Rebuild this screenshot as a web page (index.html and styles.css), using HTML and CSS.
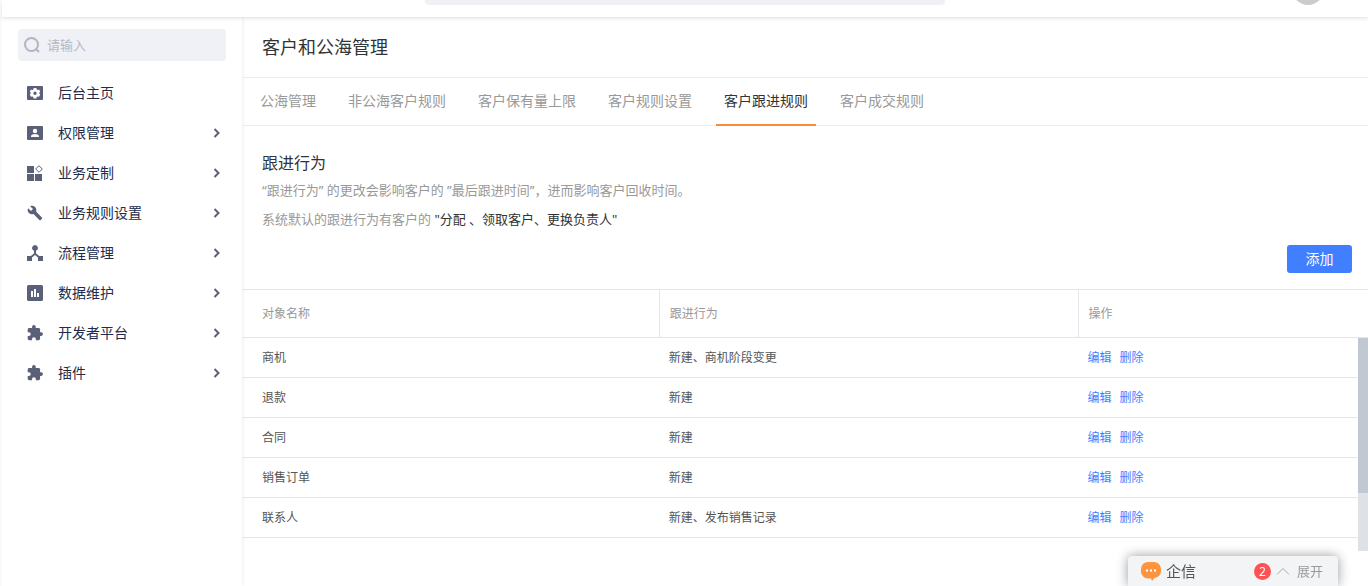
FILE: index.html
```html
<!DOCTYPE html>
<html lang="zh-CN">
<head>
<meta charset="utf-8">
<title>客户和公海管理</title>
<link rel="stylesheet" href="styles.css">
</head>
<body>
<svg class="sprite" aria-hidden="true">
  <symbol id="arrow" viewBox="0 0 8 10"><path d="M1.500 1l4 4-4 4" fill="none" stroke="currentColor" stroke-width="2"/></symbol>
  <symbol id="puzzle" viewBox="1 1 22 22"><path d="M20.500 11H19V7c0-1.100-.9-2-2-2h-4V3.500a2.500 2.500 0 0 0-5 0V5H4c-1.100 0-2 .9-2 2v3.800h1.500a2.700 2.700 0 0 1 0 5.400H2V20c0 1.100.9 2 2 2h3.800v-1.500a2.700 2.700 0 0 1 5.400 0V22H17c1.100 0 2-.9 2-2v-4h1.500a2.500 2.500 0 0 0 0-5z"/></symbol>
</svg>
<header class="topbar">
  <div class="topbar-search"></div>
  <div class="avatar"></div>
</header>
<div class="shell">
  <aside class="sidebar">
    <label class="search">
      <svg class="search-icon" viewBox="0 0 16 16"><circle cx="7.500" cy="7.500" r="6.500"/><path d="M12 12l3 3"/></svg>
      <input class="search-input" type="text" placeholder="请输入" aria-label="搜索">
    </label>
    <nav class="menu">
      <a class="item" href="#"><svg class="icon" viewBox="0 0 16 16"><path fill-rule="evenodd" d="M1 1h14a1 1 0 0 1 1 1v12a1 1 0 0 1-1 1H1a1 1 0 0 1-1-1V2a1 1 0 0 1 1-1zM6.700 3l-.4 1.500-.9.500L4 4.600 2.700 6.800l1.100 1v.8l-1.100 1L4 11.800l1.400-.4.900.5.400 1.500h2.600l.4-1.500.9-.5 1.400.4 1.300-2.200-1.100-1v-.8l1.100-1L12 4.600l-1.400.4-.9-.5L9.300 3zM8 6.500a1.700 1.700 0 1 1 0 3.400 1.700 1.700 0 0 1 0-3.400z"/></svg><span class="name">后台主页</span></a>
      <a class="item" href="#"><svg class="icon" viewBox="0 0 16 16"><path fill-rule="evenodd" d="M1 1h14a1 1 0 0 1 1 1v12a1 1 0 0 1-1 1H1a1 1 0 0 1-1-1V2a1 1 0 0 1 1-1zM8 3.800a2.200 2.200 0 1 0 0 4.400 2.200 2.200 0 0 0 0-4.400zM4 12h8v-.8C12 9.700 9.500 9 8 9s-4 .7-4 2.200z"/></svg><span class="name">权限管理</span><svg class="arrow"><use href="#arrow"/></svg></a>
      <a class="item" href="#"><svg class="icon" viewBox="0 0 16 16"><path d="M0 1h7v7H0zM0 9h7v7H0zM8 9h7v7H8z"/><path d="M12 .7L15.300 4 12 7.300 8.700 4z" fill="none" stroke="currentColor"/></svg><span class="name">业务定制</span><svg class="arrow"><use href="#arrow"/></svg></a>
      <a class="item" href="#"><svg class="icon" viewBox="0 0 24 24"><path d="M22.700 19l-9.100-9.100c.9-2.300.4-5-1.500-6.900-2-2-5-2.400-7.400-1.300L9 6 6 9 1.600 4.700C.4 7.100.9 10.100 2.900 12.100c1.900 1.900 4.600 2.400 6.900 1.500l9.100 9.100c.4.400 1 .4 1.400 0l2.300-2.300c.5-.4.5-1.100.1-1.400z"/></svg><span class="name">业务规则设置</span><svg class="arrow"><use href="#arrow"/></svg></a>
      <a class="item" href="#"><svg class="icon" viewBox="0 0 16 16"><path d="M8 0a3 3 0 0 1 1 5.800v2.700l3.200 2.500H16v5h-5v-3.600l-3-2.300-3 2.300V16H0v-5h3.800L7 8.500V5.800A3 3 0 0 1 8 0z"/></svg><span class="name">流程管理</span><svg class="arrow"><use href="#arrow"/></svg></a>
      <a class="item" href="#"><svg class="icon" viewBox="0 0 16 16"><path fill-rule="evenodd" d="M1.500 0h13A1.500 1.500 0 0 1 16 1.500v13a1.500 1.500 0 0 1-1.500 1.500h-13A1.500 1.500 0 0 1 0 14.500v-13A1.500 1.500 0 0 1 1.500 0zM4 6v6h2V6zM7 4v8h2V4zM10 8v4h2V8z"/></svg><span class="name">数据维护</span><svg class="arrow"><use href="#arrow"/></svg></a>
      <a class="item" href="#"><svg class="icon"><use href="#puzzle"/></svg><span class="name">开发者平台</span><svg class="arrow"><use href="#arrow"/></svg></a>
      <a class="item" href="#"><svg class="icon"><use href="#puzzle"/></svg><span class="name">插件</span><svg class="arrow"><use href="#arrow"/></svg></a>
    </nav>
  </aside>
  <main class="main">
    <h1 class="title">客户和公海管理</h1>
    <nav class="tabs">
      <a class="tab" href="#">公海管理</a>
      <a class="tab" href="#">非公海客户规则</a>
      <a class="tab" href="#">客户保有量上限</a>
      <a class="tab" href="#">客户规则设置</a>
      <a class="tab active" href="#">客户跟进规则</a>
      <a class="tab" href="#">客户成交规则</a>
    </nav>
    <section class="intro">
      <h2 class="subtitle">跟进行为</h2>
      <p class="note">“跟进行为” 的更改会影响客户的 ”最后跟进时间”，进而影响客户回收时间。</p>
      <p class="note">系统默认的跟进行为有客户的 <span class="strong">"分配 、领取客户、更换负责人"</span></p>
      <div class="actions"><button class="add" type="button">添加</button></div>
    </section>
    <div class="table-wrap">
      <table class="table">
        <colgroup><col class="col-name"><col class="col-behavior"><col></colgroup>
        <thead><tr><th>对象名称</th><th>跟进行为</th><th>操作</th></tr></thead>
        <tbody>
          <tr><td>商机</td><td>新建、商机阶段变更</td><td><a class="link" href="#">编辑</a><a class="link" href="#">删除</a></td></tr>
          <tr><td>退款</td><td>新建</td><td><a class="link" href="#">编辑</a><a class="link" href="#">删除</a></td></tr>
          <tr><td>合同</td><td>新建</td><td><a class="link" href="#">编辑</a><a class="link" href="#">删除</a></td></tr>
          <tr><td>销售订单</td><td>新建</td><td><a class="link" href="#">编辑</a><a class="link" href="#">删除</a></td></tr>
          <tr><td>联系人</td><td>新建、发布销售记录</td><td><a class="link" href="#">编辑</a><a class="link" href="#">删除</a></td></tr>
        </tbody>
      </table>
      <div class="scrollbar"><div class="thumb"></div></div>
    </div>
  </main>
</div>
<div class="chat">
  <svg class="bubble" viewBox="0 0 20 19"><path d="M7 0h6a7 7 0 0 1 7 7v2a7 7 0 0 1-6.500 7L11 19l-1-2.500H7A7 7 0 0 1 0 9V7a7 7 0 0 1 7-7z" fill="#ff943e"/><path d="M5 7.500h2v2H5zM9 7.500h2v2H9zM13 7.500h2v2h-2z" fill="#fff"/></svg>
  <span class="chat-name">企信</span>
  <span class="badge">2</span>
  <button class="expand" type="button"><svg class="caret" viewBox="0 0 14 8"><path d="M1 7.500l6-6 6 6" fill="none" stroke="#aaa"/></svg>展开</button>
</div>
</body>
</html>
```

FILE: styles.css
```css
* { box-sizing: border-box; }
body {
  margin: 0;
  min-height: 100vh;
  display: flex;
  flex-direction: column;
  overflow: hidden;
  background: #fff;
  color: #333;
  font: 14px/20px "Noto Sans", "Noto Sans CJK SC", sans-serif;
}
a { text-decoration: none; color: inherit; }
button, input { font: inherit; }
.sprite { position: absolute; width: 0; height: 0; }

.topbar {
  position: relative;
  z-index: 1;
  display: grid;
  grid-template-columns: 1fr 38% 1fr;
  height: 17px;
  margin-left: 2px;
  background: #fff;
  box-shadow: 0 1px 4px rgba(0, 0, 0, .14);
}
.topbar-search {
  grid-column: 2;
  height: 5px;
  background: #f0f1f6;
  border-radius: 0 0 4px 4px;
}
.avatar {
  justify-self: end;
  width: 32px;
  height: 32px;
  margin: -27px 44px 0 0;
  border-radius: 50%;
  background: #ccc;
}

.shell { display: flex; flex: 1; }
.sidebar {
  width: 242px;
  padding: 12px 16px 0;
  border-left: 2px solid #fafafa;
  box-shadow: 0 0 4px rgba(0, 0, 0, .1);
}
.search {
  display: flex;
  align-items: center;
  gap: 7px;
  height: 32px;
  padding: 0 6px;
  border-radius: 4px;
  background: #f0f1f6;
}
.search-icon { flex: none; width: 16px; height: 16px; fill: none; stroke: #b3b5be; stroke-width: 2; }
.search-input {
  width: 100%;
  min-width: 0;
  padding: 0;
  border: 0;
  outline: 0;
  background: none;
  font-size: 13px;
}
.search-input::placeholder { color: #b6b8c2; opacity: 1; }
.menu { margin-top: 12px; }
.item {
  display: flex;
  align-items: center;
  height: 40px;
  padding: 0 5px 0 9px;
  color: #212b4b;
}
.icon { width: 16px; height: 16px; margin-right: 15px; fill: currentColor; color: #5b6079; }
.name { flex: 1; }
.arrow { width: 8px; height: 10px; color: #5b6079; }

.main { flex: 1; min-width: 0; }
.title {
  margin: 0;
  padding: 18px 20px 17px;
  border-bottom: 1px solid #ececec;
  font-size: 18px;
  line-height: 25px;
  font-weight: 400;
}
.tabs {
  display: flex;
  gap: 16px;
  height: 48px;
  padding: 0 10px;
  border-bottom: 1px solid #ececec;
  color: #999;
}
.tab { height: 48px; padding: 0 8px; line-height: 46px; }
.tab.active { color: #333; border-bottom: 2px solid #f68d3c; }

.intro { padding: 24px 16px 16px 20px; }
.subtitle { margin: 0; font-size: 16px; line-height: 26px; font-weight: 400; }
.note { margin: 0; font-size: 13px; line-height: 29px; color: #999; }
.strong { color: #333; }
.actions { display: flex; justify-content: flex-end; margin-top: 11px; }
.add {
  width: 65px;
  height: 28px;
  padding: 0;
  border: 0;
  border-radius: 3px;
  background: #407fff;
  color: #fff;
}

.table-wrap { position: relative; font-size: 12px; }
.table {
  width: 100%;
  table-layout: fixed;
  border-collapse: separate;
  border-spacing: 0;
  border-top: 1px solid #e4e6ee;
}
.col-name { width: 37.1%; }
.col-behavior { width: 37.2%; }
th, td {
  padding: 0 9px;
  border-bottom: 1px solid #e4e6ee;
  text-align: left;
  font-weight: 400;
}
th { height: 48px; padding: 0 10px; color: #999; }
th:not(:last-child) { border-right: 1px solid #e4e6ee; }
td { height: 40px; color: #555; }
th:first-child, td:first-child { padding-left: 20px; }
.link { margin-right: 8px; color: #407fff; }
.scrollbar {
  position: absolute;
  top: 49px;
  right: 0;
  width: 10px;
  height: 213px;
  background: #dee1e6;
}
.thumb { height: 73%; background: #c1c8d1; }

.chat {
  position: fixed;
  right: 30px;
  bottom: 0;
  display: flex;
  align-items: center;
  width: 210px;
  height: 30px;
  padding: 0 15px 0 13px;
  border-radius: 4px 4px 0 0;
  background: #f3f4f6;
  box-shadow: 0 0 12px rgba(0, 0, 0, .4);
}
.bubble { width: 20px; height: 19px; margin-right: 5px; }
.chat-name { flex: 1; font-size: 15px; color: #555; }
.badge {
  width: 17px;
  height: 17px;
  border-radius: 50%;
  background: #ff5252;
  color: #fff;
  font-size: 12px;
  line-height: 17px;
  text-align: center;
}
.expand {
  display: flex;
  align-items: center;
  gap: 7px;
  margin-left: 5px;
  padding: 0;
  border: 0;
  background: none;
  color: #999;
  font-size: 13px;
}
.caret { width: 14px; height: 8px; }
```
